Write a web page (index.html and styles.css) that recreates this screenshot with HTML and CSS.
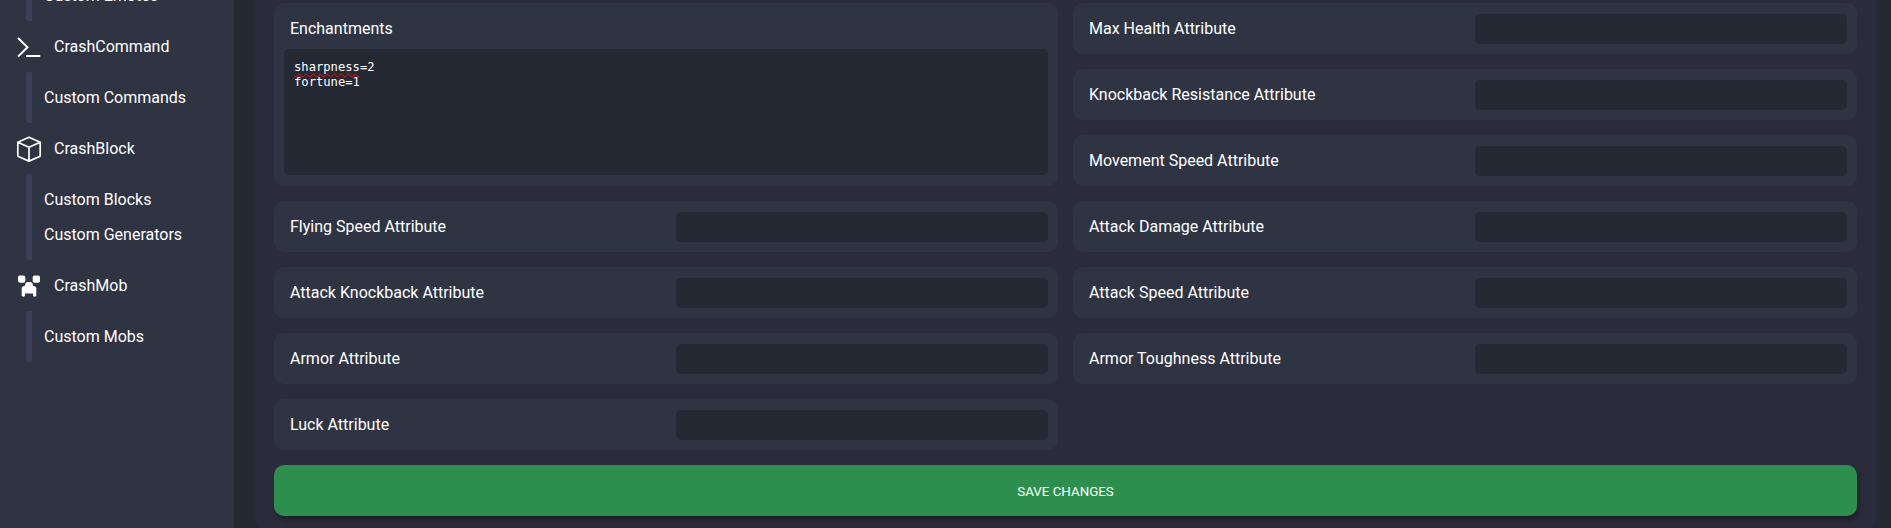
FILE: index.html
```html
<!DOCTYPE html>
<html lang="en">
<head>
  <meta charset="UTF-8" />
  <meta name="viewport" content="width=device-width, initial-scale=1.0" />
  <title>Custom Items</title>
  <link rel="stylesheet" href="styles.css">
</head>
<body>
  <div class="layout">
    <nav class="sidebar">
      <ul class="sub-menu">
        <li>Custom Emotes</li>
      </ul>
      <div class="menu-title">
        <svg class="icon" viewBox="0 0 26 26" fill="none" stroke="#fff" stroke-width="2">
          <path d="M2 4 L11.5 13.3 L2 22.6 M10 22 H24.3" />
        </svg>
        <span>CrashCommand</span>
      </div>
      <ul class="sub-menu">
        <li>Custom Commands</li>
      </ul>
      <div class="menu-title">
        <svg class="icon" viewBox="0 0 26 26" fill="none" stroke="#fff" stroke-width="1.7" stroke-linejoin="round">
          <path d="M13 1.3 L24.2 6.3 V20.3 L13 25.1 L1.8 20.3 V6.3 Z M1.8 6.3 L13 11.3 L24.2 6.3 M13 11.3 V25.1" />
        </svg>
        <span>CrashBlock</span>
      </div>
      <ul class="sub-menu">
        <li>Custom Blocks</li>
        <li>Custom Generators</li>
      </ul>
      <div class="menu-title">
        <svg class="icon" viewBox="0 0 26 26" fill="#fff">
          <rect x="2" y="2.4" width="7.3" height="7.3" rx="1.8" />
          <rect x="16.7" y="2.4" width="7.3" height="7.3" rx="1.8" />
          <path d="M11 9 H15 Q16.7 9.5 17.3 13 Q20.3 13.2 20.3 15.5 V22.8 Q18.6 24.6 17 22.8 V20.5 H9 V22.8 Q7.4 24.6 5.7 22.8 V15.5 Q5.7 13.2 8.7 13 Q9.3 9.5 11 9 Z" />
        </svg>
        <span>CrashMob</span>
      </div>
      <ul class="sub-menu">
        <li>Custom Mobs</li>
      </ul>
    </nav>

    <main class="panel">
      <form class="form-grid">
        <div class="field field-tall">
          <label for="enchantments">Enchantments</label>
          <div class="textarea" id="enchantments"><span class="misspelled">sharpness</span>=2<br>fortune=1</div>
        </div>
        <div class="field">
          <label for="maxHealth">Max Health Attribute</label>
          <input type="text" id="maxHealth" />
        </div>
        <div class="field">
          <label for="knockbackResistance">Knockback Resistance Attribute</label>
          <input type="text" id="knockbackResistance" />
        </div>
        <div class="field">
          <label for="movementSpeed">Movement Speed Attribute</label>
          <input type="text" id="movementSpeed" />
        </div>
        <div class="field">
          <label for="flyingSpeed">Flying Speed Attribute</label>
          <input type="text" id="flyingSpeed" />
        </div>
        <div class="field">
          <label for="attackDamage">Attack Damage Attribute</label>
          <input type="text" id="attackDamage" />
        </div>
        <div class="field">
          <label for="attackKnockback">Attack Knockback Attribute</label>
          <input type="text" id="attackKnockback" />
        </div>
        <div class="field">
          <label for="attackSpeed">Attack Speed Attribute</label>
          <input type="text" id="attackSpeed" />
        </div>
        <div class="field">
          <label for="armor">Armor Attribute</label>
          <input type="text" id="armor" />
        </div>
        <div class="field">
          <label for="armorToughness">Armor Toughness Attribute</label>
          <input type="text" id="armorToughness" />
        </div>
        <div class="field">
          <label for="luck">Luck Attribute</label>
          <input type="text" id="luck" />
        </div>
        <button type="button" class="save-btn">Save Changes</button>
      </form>
    </main>
  </div>
</body>
</html>
```

FILE: styles.css
```css
:root {
  --background: #252934;
  --panel: #2a2c3b;
  --card: #2f3442;
  --line: #3c4056;
  --green: #2c8f4e;
}
* {
  box-sizing: border-box;
  margin: 0;
  padding: 0;
}
body {
  font-family: Roboto, sans-serif;
  font-size: 16px;
  line-height: 19px;
  background-color: var(--background);
  color: #fff;
  overflow: hidden;
}
.layout {
  display: flex;
  height: 528px;
}
.sidebar {
  display: flex;
  flex-direction: column;
  justify-content: flex-end;
  width: 234px;
  background-color: var(--card);
  padding: 0 16px 166px;
}
.menu-title {
  display: flex;
  align-items: center;
  flex-shrink: 0;
  gap: 12px;
  height: 51px;
}
.icon {
  width: 26px;
  height: 26px;
}
.sub-menu {
  flex-shrink: 0;
  list-style: none;
  margin-left: 10px;
  padding: 8px 0 8px 18px;
  background: linear-gradient(var(--line), var(--line)) left / 6px 100% no-repeat;
  border-radius: 3px;
}
.sub-menu li {
  height: 35px;
  line-height: 35px;
}
.panel {
  width: 1623px;
  height: 531px;
  margin-left: 20px;
  padding: 3px 20px 0;
  background-color: var(--panel);
  border-radius: 0 0 15px 15px;
}
.form-grid {
  display: grid;
  grid-template-columns: 1fr 1fr;
  grid-auto-rows: 51px;
  gap: 15px;
}
.field {
  display: flex;
  align-items: center;
  justify-content: space-between;
  background-color: var(--card);
  border-radius: 10px;
  padding: 1px 10px 0 16px;
}
.field label {
  margin-bottom: 2px;
}
.field-tall {
  grid-row: span 3;
  flex-direction: column;
  align-items: stretch;
  justify-content: flex-start;
  padding: 16px 10px 0;
}
.field-tall label {
  margin: 0 0 11px 6px;
}
input {
  width: 372px;
  height: 30px;
  border: none;
  border-radius: 5px;
  background-color: var(--background);
  color: #fff;
}
.textarea {
  height: 126px;
  padding: 11px 10px 10px;
  border-radius: 5px;
  background-color: var(--background);
  font-family: "DejaVu Sans Mono", monospace;
  font-size: 12.17px;
  line-height: 15px;
}
.misspelled {
  text-decoration: underline wavy #f01010 1.4px;
  text-decoration-skip-ink: none;
  text-underline-offset: 2px;
}
.save-btn {
  grid-column: span 2;
  padding-top: 2px;
  border: none;
  border-radius: 10px;
  background-color: var(--green);
  box-shadow: 2px 4px 4px rgba(0, 0, 0, 0.3);
  color: #fff;
  font-family: inherit;
  font-size: 13.33px;
  text-transform: uppercase;
  cursor: pointer;
}
```
